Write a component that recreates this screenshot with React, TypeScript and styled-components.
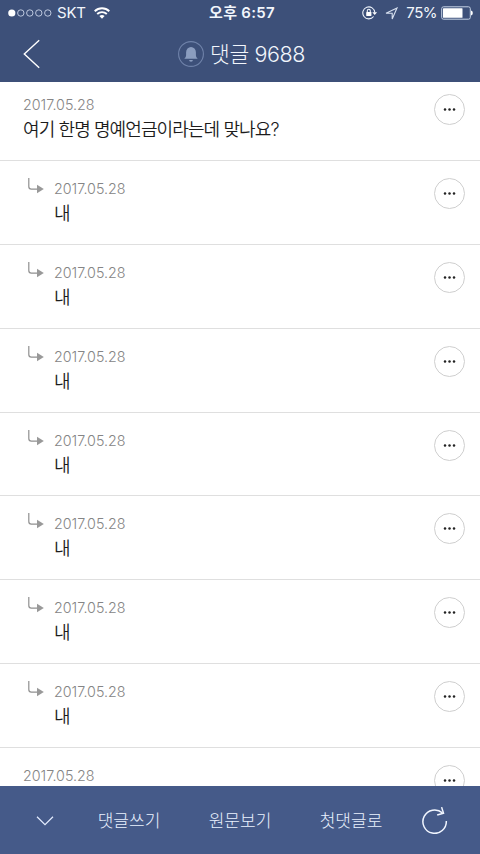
import React from "react";
import styled, { createGlobalStyle } from "styled-components";

const GlobalStyle = createGlobalStyle`
  * { box-sizing: border-box; }
  html, body { margin: 0; padding: 0; background: #fff; overflow: hidden; }
  body { font-family: Inter, "Noto Sans CJK KR", sans-serif; }
  svg { display: block; flex: none; }
`;

const Screen = styled.div`
  display: flex;
  flex-direction: column;
  width: 480px;
  height: 854px;
  overflow: hidden;
  background: #fff;
`;

const Header = styled.header`
  flex: none;
  height: 82px;
  background: #3d5079;
  color: #f2f6fc;
`;

const StatusBar = styled.div`
  display: grid;
  grid-template-columns: 1fr auto 1fr;
  align-items: center;
  height: 26px;
  padding: 0 7px 0 8px;
`;

const StatusGroup = styled.div<{ $end?: boolean }>`
  display: flex;
  align-items: center;
  justify-content: ${(p) => (p.$end ? "flex-end" : "flex-start")};
`;

const StatusText = styled.span<{ $bold?: boolean }>`
  font-size: 15px;
  line-height: 26px;
  font-weight: ${(p) => (p.$bold ? 600 : 400)};
  white-space: nowrap;
`;

const Clock = styled(StatusText)`
  padding-left: 3px;
  letter-spacing: 0.3px;
`;

const Carrier = styled(StatusText)`
  margin: 0 8px 0 5px;
  letter-spacing: -0.2px;
`;

const Battery = styled(StatusText)`
  margin: 0 4px 0 8px;
  letter-spacing: -0.5px;
`;

const TitleBar = styled.div`
  display: grid;
  grid-template-columns: 64px 1fr 64px;
  align-items: center;
  height: 56px;
`;

const PlainButton = styled.button`
  display: flex;
  align-items: center;
  justify-content: center;
  padding: 0;
  border: 0;
  background: none;
  color: inherit;
  font: inherit;
`;

const Title = styled.h1`
  display: flex;
  align-items: center;
  justify-content: center;
  gap: 6px;
  margin: 0;
  padding-left: 3px;
  font-size: 21.5px;
  line-height: 56px;
  font-weight: 300;
  letter-spacing: -0.4px;
`;

const List = styled.main`
  flex: 1;
  min-height: 0;
  overflow: hidden;
`;

const ScrolledRows = styled.div`
  margin-top: -5px;
`;

const Row = styled.article<{ $reply?: boolean }>`
  display: flex;
  align-items: flex-start;
  height: 83.9px;
  padding: 17px 15px 0 ${(p) => (p.$reply ? 28 : 23)}px;
  border-bottom: 1px solid #dfdfdf;
`;

const ReplyMark = styled.span`
  width: 26px;
  flex: none;
  margin-top: -1px;
`;

const Content = styled.div`
  flex: 1;
`;

const DateText = styled.time`
  display: block;
  font-size: 14.3px;
  line-height: 22px;
  font-weight: 300;
  color: #858585;
`;

const Message = styled.p`
  margin: 0;
  font-size: 18px;
  line-height: 27px;
  font-weight: 350;
  letter-spacing: -0.9px;
  color: #1c1c1c;
  white-space: nowrap;
`;

const MoreButton = styled(PlainButton)`
  flex: none;
  width: 31px;
  height: 31px;
  border: 1px solid #cfcfcf;
  border-radius: 50%;
`;

const MoreIcon = () => (
  <svg width="13" height="3" viewBox="0 0 13 3" fill="#222">
    <circle cx="2" cy="1.5" r="1.25" />
    <circle cx="6.5" cy="1.5" r="1.25" />
    <circle cx="11" cy="1.5" r="1.25" />
  </svg>
);

const Toolbar = styled.footer`
  flex: none;
  display: grid;
  grid-template-columns: 90px 78px 144px 78px 90px;
  align-items: center;
  height: 68px;
  background: #455a89;
  color: #eaf2ff;
`;

const ToolLabel = styled(PlainButton)`
  padding-top: 2px;
  font-size: 17px;
  line-height: 66px;
  font-weight: 300;
  white-space: nowrap;
`;

const SignalIcon = () => (
  <svg width="44" height="10" viewBox="0 0 44 10" fill="none" stroke="#c9d4e8" strokeWidth="0.9">
    <circle cx="3.8" cy="5" r="3.6" fill="#fff" stroke="none" />
    {[12.8, 21.8, 30.8, 39.8].map((x) => (
      <circle key={x} cx={x} cy="5" r="3.2" />
    ))}
  </svg>
);

const WifiIcon = () => (
  <svg width="16" height="12" viewBox="0 0 16 12" fill="none" stroke="#fff" strokeWidth="1.9">
    <path d="M.7 4.2a10.5 10.5 0 0 1 14.6 0M3.2 7a7 7 0 0 1 9.6 0" />
    <path d="M5.4 9.1a3.8 3.8 0 0 1 5.2 0L8 11.8z" fill="#fff" stroke="none" />
  </svg>
);

const RotationLockIcon = () => (
  <svg width="23" height="14" viewBox="0 0 23 14" fill="none" stroke="#eef4fc" strokeWidth="1.1">
    <path d="M11.6 10.5A6 6 0 1 1 12.8 6.5" />
    <path d="M10.3 6.2h4.8l-2.4 2.8z" fill="#fff" stroke="none" />
    <rect x="4.2" y="6" width="5.2" height="4" rx=".4" fill="#fff" stroke="none" />
    <path d="M5.3 6V4.8a1.5 1.5 0 0 1 3 0V6" />
  </svg>
);

const LocationIcon = () => (
  <svg width="13" height="13" viewBox="0 0 13 13" fill="none" stroke="#d7e0f0" strokeWidth="1.1">
    <path d="M12 1 7.2 12V6.2H1z" />
  </svg>
);

const BatteryIcon = () => (
  <svg width="32" height="14" viewBox="0 0 32 14">
    <rect x=".7" y=".8" width="28.6" height="12.4" rx="1.8" fill="none" stroke="#c6d2e5" strokeWidth="1" />
    <rect x="2" y="2.2" width="19.5" height="9.6" rx=".5" fill="#fff" />
    <path d="M30 4.6q1.8.3 1.8 2.4T30 9.4z" fill="#fff" />
  </svg>
);

const BackIcon = () => (
  <svg width="18" height="30" viewBox="0 0 18 30" fill="none" stroke="#fff" strokeWidth="1.4">
    <path d="M16.2 1.2 1.3 15l14.9 13.7" />
  </svg>
);

const BellIcon = () => (
  <svg width="26" height="26" viewBox="0 0 26 26">
    <circle cx="13" cy="13" r="12.4" fill="none" stroke="#7083aa" strokeWidth="1.1" />
    <path d="M6.3 17.8q1.8-1.2 1.8-3.6v-3a4.9 5.2 0 0 1 9.8 0v3q0 2.4 1.8 3.6z" fill="#8b9dbf" />
    <path d="M11.1 19h3.8a1.9 1.7 0 0 1-3.8 0z" fill="#8b9dbf" />
  </svg>
);

const ReplyIcon = () => (
  <svg width="17" height="18" viewBox="0 0 17 18">
    <path d="M.8 1v8.5q0 2.6 2.6 2.6H10" fill="none" stroke="#909090" strokeWidth="1.2" />
    <path d="M9 7.8 15.8 12 9 16.2z" fill="#999" />
  </svg>
);

const ChevronIcon = () => (
  <svg width="18" height="11" viewBox="0 0 18 11" fill="none" stroke="#e4edff" strokeWidth="1.2">
    <path d="m1 1.8 8 7.9 8-7.9" />
  </svg>
);

const RefreshIcon = () => (
  <svg width="28" height="28" viewBox="0 0 28 28" fill="none" stroke="#f1f6ff" strokeWidth="1.5">
    <path d="M25.3 15A11.7 11.7 0 1 1 21.4 6.9" />
    <path d="M20.6 1.1 22.5 7.2 16.2 9" />
  </svg>
);

type Comment = { date: string; text?: string; reply?: boolean };

const comments: Comment[] = [
  { date: "2017.05.28", text: "여기 한명 명예언금이라는데 맞나요?" },
  ...Array.from({ length: 7 }, () => ({ date: "2017.05.28", text: "내", reply: true })),
  { date: "2017.05.28" },
];

const CommentRow = ({ date, text, reply }: Comment) => (
  <Row $reply={reply}>
    {reply && (
      <ReplyMark>
        <ReplyIcon />
      </ReplyMark>
    )}
    <Content>
      <DateText>{date}</DateText>
      {text && <Message>{text}</Message>}
    </Content>
    <MoreButton aria-label="더보기">
      <MoreIcon />
    </MoreButton>
  </Row>
);

export default function App() {
  return (
    <Screen>
      <GlobalStyle />
      <Header>
        <StatusBar>
          <StatusGroup>
            <SignalIcon />
            <Carrier>SKT</Carrier>
            <WifiIcon />
          </StatusGroup>
          <Clock $bold>오후 6:57</Clock>
          <StatusGroup $end>
            <RotationLockIcon />
            <LocationIcon />
            <Battery>75%</Battery>
            <BatteryIcon />
          </StatusGroup>
        </StatusBar>
        <TitleBar>
          <PlainButton aria-label="뒤로">
            <BackIcon />
          </PlainButton>
          <Title>
            <BellIcon />
            <span>댓글 9688</span>
          </Title>
        </TitleBar>
      </Header>
      <List>
        <ScrolledRows>
          {comments.map((comment, i) => (
            <CommentRow key={i} {...comment} />
          ))}
        </ScrolledRows>
      </List>
      <Toolbar>
        <PlainButton aria-label="아래로">
          <ChevronIcon />
        </PlainButton>
        <ToolLabel>댓글쓰기</ToolLabel>
        <ToolLabel>원문보기</ToolLabel>
        <ToolLabel>첫댓글로</ToolLabel>
        <PlainButton aria-label="새로고침">
          <RefreshIcon />
        </PlainButton>
      </Toolbar>
    </Screen>
  );
}
